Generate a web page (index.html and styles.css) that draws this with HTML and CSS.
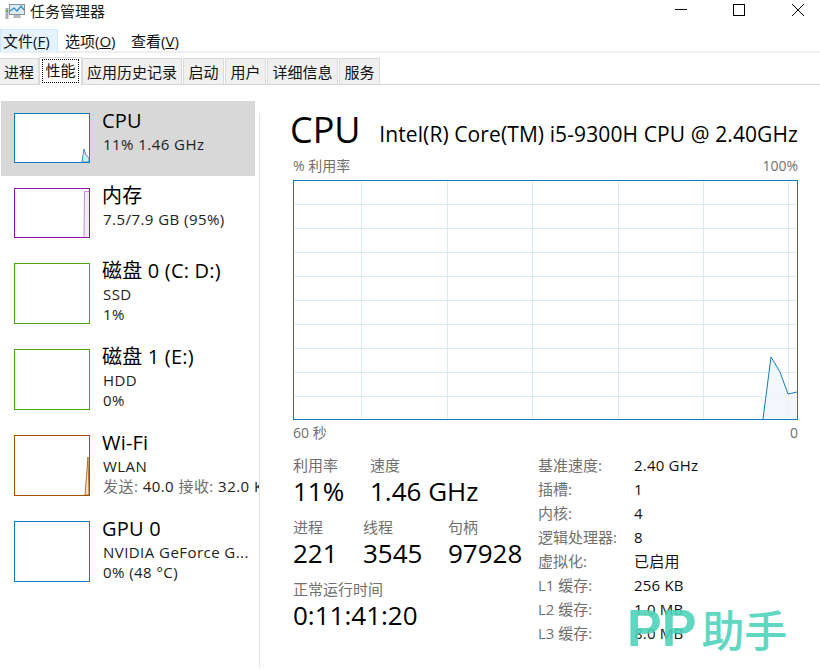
FILE: index.html
```html
<!DOCTYPE html>
<html lang="zh-CN">
<head>
<meta charset="utf-8">
<title>任务管理器</title>
<link rel="stylesheet" href="styles.css">
</head>
<body>
<div class="window">
  <header class="titlebar">
    <svg class="app-icon" width="24" height="20" viewBox="0 0 24 20"><rect x="4.5" y="3.5" width="15" height="10" fill="#dcecf7" stroke="#8a9299"/><path d="M5 10l4-3 3 3 4-5 3 4" fill="none" stroke="#2f8fc4" stroke-width="1.3"/><path d="M9 14h6l1 3H8z" fill="#b4babf"/><rect x="0.5" y="7" width="3" height="11" fill="#a8aeb3"/><rect x="1" y="9" width="2" height="2" fill="#58b23c"/></svg>
    <span class="title">任务管理器</span>
    <div class="controls">
      <svg class="ctl" width="58" height="20" viewBox="0 0 58 20"><path d="M37 9.5h12" stroke="#000" fill="none"/></svg>
      <svg class="ctl" width="58" height="20" viewBox="0 0 58 20"><rect x="37.5" y="4.5" width="11" height="11" fill="none" stroke="#000"/></svg>
      <svg class="ctl" width="58" height="20" viewBox="0 0 58 20"><path d="M38 4l12 12M50 4l-12 12" stroke="#000" fill="none"/></svg>
    </div>
  </header>
  <nav class="menubar">
    <span class="menu menu-on">文件(<u>F</u>)</span>
    <span class="menu">选项(<u>O</u>)</span>
    <span class="menu">查看(<u>V</u>)</span>
  </nav>
  <div class="tabs">
    <span class="tab t1">进程</span>
    <span class="tab tab-on"><span class="focus">性能</span></span>
    <span class="tab t3">应用历史记录</span>
    <span class="tab t4">启动</span>
    <span class="tab t4">用户</span>
    <span class="tab t6">详细信息</span>
    <span class="tab t4">服务</span>
  </div>
  <div class="content">
    <aside class="sidebar">
      <div class="item short selected">
        <svg class="thumb thumb-s" viewBox="0 0 76 50"><path d="M68 49l2-13 2 6 3 3v4z" fill="#d9e9f4" stroke="#117dbb" stroke-width=".8"/><rect x=".5" y=".5" width="75" height="49" fill="none" stroke="#117dbb"/></svg>
        <div class="info"><div class="name">CPU</div><div class="sub">11% 1.46 GHz</div></div>
      </div>
      <div class="item short">
        <svg class="thumb thumb-s" viewBox="0 0 76 50"><path d="M70 49l.5-45.500H75V49z" fill="#f3eaf7"/><path d="M70 49l.5-45.500H75" fill="none" stroke="#c68fd8"/><rect x=".5" y=".5" width="75" height="49" fill="none" stroke="#8b12ae"/></svg>
        <div class="info"><div class="name">内存</div><div class="sub">7.5/7.9 GB (95%)</div></div>
      </div>
      <div class="item">
        <svg class="thumb thumb-l" viewBox="0 0 76 61"><rect x=".5" y=".5" width="75" height="60" fill="none" stroke="#4da60c"/></svg>
        <div class="info"><div class="name">磁盘 0 (C: D:)</div><div class="sub">SSD</div><div class="sub">1%</div></div>
      </div>
      <div class="item">
        <svg class="thumb thumb-l" viewBox="0 0 76 61"><rect x=".5" y=".5" width="75" height="60" fill="none" stroke="#4da60c"/></svg>
        <div class="info"><div class="name">磁盘 1 (E:)</div><div class="sub">HDD</div><div class="sub">0%</div></div>
      </div>
      <div class="item">
        <svg class="thumb thumb-l" viewBox="0 0 76 61"><path d="M71 60l3-38 1 38z" fill="#f0dfcf" stroke="#a74f01" stroke-width=".8"/><rect x=".5" y=".5" width="75" height="60" fill="none" stroke="#a74f01"/></svg>
        <div class="info"><div class="name">Wi-Fi</div><div class="sub">WLAN</div><div class="sub nowrap"><span class="muted">发送:</span> 40.0 <span class="muted">接收:</span> 32.0 Kbps</div></div>
      </div>
      <div class="item">
        <svg class="thumb thumb-l" viewBox="0 0 76 61"><rect x=".5" y=".5" width="75" height="60" fill="none" stroke="#117dbb"/></svg>
        <div class="info"><div class="name">GPU 0</div><div class="sub">NVIDIA GeForce G...</div><div class="sub">0% (48 °C)</div></div>
      </div>
    </aside>
    <main class="main">
      <div class="heading"><h1>CPU</h1><span class="model">Intel(R) Core(TM) i5-9300H CPU @ 2.40GHz</span></div>
      <div class="axis axis-top"><span>% 利用率</span><span>100%</span></div>
      <svg class="chart" width="505" height="240" viewBox="0 0 505 240">
        <path d="M68 0v240M154 0v240M239 0v240M325 0v240M410 0v240M495 0v240M0 24h505M0 48h505M0 72h505M0 96h505M0 120h505M0 144h505M0 168h505M0 192h505M0 216h505" stroke="#d9eaf4" fill="none" transform="translate(.5 .5)"/>
        <path d="M470 239l8-62 9 15 8 22 9-2v27z" fill="#f1f6fa" fill-opacity=".85"/>
        <path d="M470 239l8-62 9 15 8 22 9-2" fill="none" stroke="#117dbb" stroke-width="1"/>
        <rect x=".5" y=".5" width="504" height="239" fill="none" stroke="#117dbb"/>
      </svg>
      <div class="axis axis-bottom"><span>60 秒</span><span>0</span></div>
      <div class="details">
        <div class="stats">
          <div class="row">
            <div class="stat w-util"><div class="label">利用率</div><div class="value">11%</div></div>
            <div class="stat"><div class="label">速度</div><div class="value">1.46 GHz</div></div>
          </div>
          <div class="row">
            <div class="stat w-proc"><div class="label">进程</div><div class="value">221</div></div>
            <div class="stat w-thr"><div class="label">线程</div><div class="value">3545</div></div>
            <div class="stat"><div class="label">句柄</div><div class="value">97928</div></div>
          </div>
          <div class="row">
            <div class="stat"><div class="label">正常运行时间</div><div class="value">0:11:41:20</div></div>
          </div>
        </div>
        <dl class="specs">
          <dt>基准速度:</dt><dd>2.40 GHz</dd>
          <dt>插槽:</dt><dd>1</dd>
          <dt>内核:</dt><dd>4</dd>
          <dt>逻辑处理器:</dt><dd>8</dd>
          <dt>虚拟化:</dt><dd>已启用</dd>
          <dt>L1 缓存:</dt><dd>256 KB</dd>
          <dt>L2 缓存:</dt><dd>1.0 MB</dd>
          <dt>L3 缓存:</dt><dd>8.0 MB</dd>
        </dl>
      </div>
    </main>
  </div>
  <div class="watermark"><span class="wm-latin">PP</span><span>助手</span></div>
</div>
</body>
</html>
```
FILE: styles.css
```css
* { box-sizing: border-box; margin: 0; padding: 0; }
html, body { width: 820px; height: 670px; overflow: hidden; background: #fff; }
body { font-family: "Open Sans", "Noto Sans CJK SC", sans-serif; color: #000; }
.window { position: relative; width: 820px; height: 670px; display: flex; flex-direction: column; }

.titlebar { height: 28px; display: flex; align-items: center; padding-left: 5px; }
.app-icon { flex: none; margin-top: -7px; }
.title { margin-left: 1px; margin-top: -7px; font-size: 15px; line-height: 20px; color: #1a1a1a; }
.controls { margin-left: auto; display: flex; margin-top: -9px; margin-right: 8px; }
.ctl { display: block; }

.menubar { height: 25px; display: flex; border-bottom: 2px solid #f0f0f0; padding-top: 1px; }
.menu { font-size: 15px; line-height: 24px; padding: 0 7px 0 8px; color: #111; width: 66px; white-space: nowrap; }
.menu-on { width: 58px; padding: 0 0 0 2px; background: #e5f3ff; border: 1px solid #cce8ff; border-bottom: 0; line-height: 22px; height: 23px; margin-right: -1px; }

.tabs { height: 32px; display: flex; align-items: flex-end; border-bottom: 1px solid #d9d9d9; gap: 1px; padding-top: 4px; }
.tab { height: 26px; font-size: 15px; line-height: 27px; text-align: center; background: #f0f0f0; border: 1px solid #d9d9d9; border-bottom: 0; color: #111; width: 41px; }
.t1 { width: 39px; border-left: 0; }
.t3 { width: 100px; }
.t4 { width: 41px; }
.t6 { width: 71px; }
.tab-on { width: 43px; height: 28px; margin: 0 -1px -1px -1px; background: #fff; position: relative; padding: 1px 1px 2px; line-height: 23px; }
.focus { display: block; height: 24px; margin: 0 1px; border: 1px dotted #000; line-height: 20px; }

.content { flex: 1; display: flex; min-height: 0; }
.sidebar { width: 260px; flex: none; padding: 16px 0 0 1px; position: relative; overflow: hidden; }
.sidebar::after { content: ""; position: absolute; right: 0; top: 28px; bottom: 3px; width: 1px; background: #e3e3e3; }
.item { height: 86px; display: flex; padding: 12px 0 0 13px; }
.item.short { height: 75px; width: 254px; }
.selected { background: #d8d8d8; }
.thumb { flex: none; display: block; width: 76px; background: #fff; }
.thumb-s { height: 50px; }
.thumb-l { height: 61px; }
.info { margin-left: 13px; margin-top: -3px; white-space: nowrap; min-width: 0; }
.name { font-size: 20px; line-height: 22px; margin-bottom: 2px; margin-left: -1px; letter-spacing: .2px; }
.sub { font-size: 15px; line-height: 20px; color: #222; letter-spacing: .45px; }
.nowrap { width: 156px; overflow: hidden; }
.muted { color: #707070; }

.main { flex: 1; padding: 0 22px 0 33px; min-width: 0; }
.heading { height: 64px; display: flex; align-items: flex-end; justify-content: space-between; }
h1 { font-size: 36px; font-weight: 400; line-height: 48px; margin: 0 0 -5px -3px; }
.model { font-size: 21px; line-height: 28px; margin-bottom: 1px; white-space: nowrap; letter-spacing: .1px; }
.axis { display: flex; justify-content: space-between; font-size: 14px; line-height: 18px; color: #707070; }
.axis-top { height: 31px; padding-top: 8px; }
.axis-bottom { height: 22px; padding-top: 4px; }
.chart { display: block; }

.details { display: flex; margin-top: 13px; }
.stats { width: 245px; flex: none; }
.row { display: flex; height: 62px; }
.stat { white-space: nowrap; }
.w-util { width: 77px; }
.w-proc { width: 70px; }
.w-thr { width: 85px; }
.label { font-size: 15px; line-height: 20px; color: #707070; }
.value { font-size: 26px; line-height: 34px; margin-top: -1px; }

.specs { display: grid; grid-template-columns: 96px 1fr; grid-auto-rows: 24px; font-size: 15px; line-height: 24px; margin-top: -2px; }
.specs dt { color: #707070; }
.specs dd { color: #111; letter-spacing: .2px; }

.watermark { position: absolute; left: 627px; top: 598px; display: flex; align-items: center; height: 60px; color: #4fd3bb; opacity: .9; font-family: "Noto Sans CJK SC", sans-serif; font-size: 43px; font-weight: 500; line-height: 60px; }
.wm-latin { font-family: "Liberation Sans", sans-serif; font-weight: 700; font-size: 52px; margin-right: 5px; }
```
